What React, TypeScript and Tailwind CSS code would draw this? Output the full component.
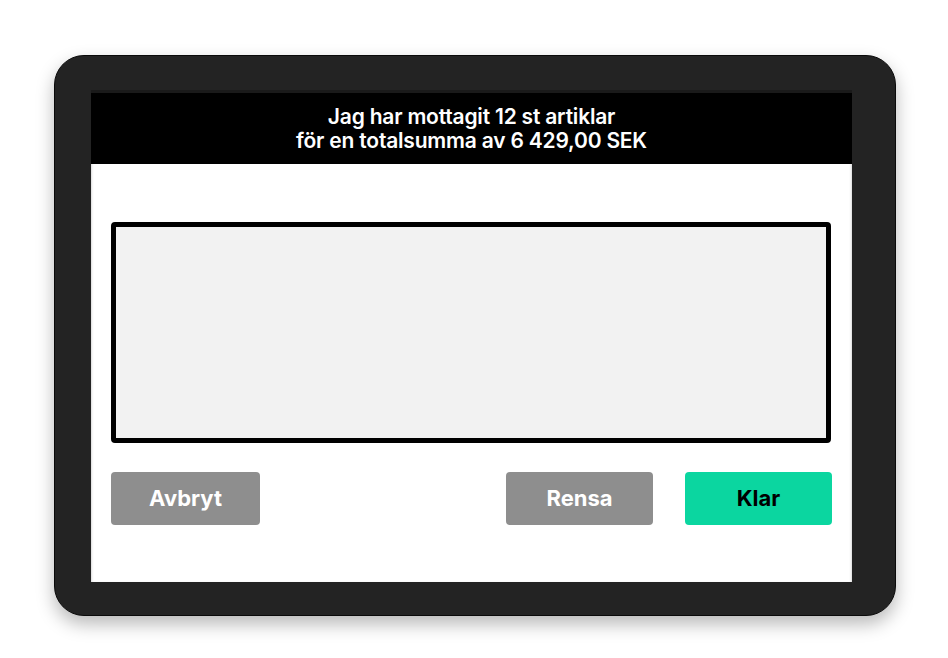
import React from "react";

export default function App() {
  return (
    <div
      className="w-[948px] h-[658px] bg-white overflow-hidden"
      style={{ fontFamily: "Inter, 'Liberation Sans', sans-serif" }}
    >
      <div className="pt-[55px] pl-[54px]">
        <div className="w-[842px] h-[561px] rounded-[30px] bg-[#232323] border border-[#0a0a0a] shadow-[0_8px_18px_rgba(0,0,0,0.28)] pt-[34px] pl-[36px]">
          <div className="w-[761px] h-[492px] bg-white flex flex-col shadow-[inset_0_2px_3px_rgba(0,0,0,0.3)]">
            <div className="h-[74px] bg-black border-t-[3px] border-[#1a1a1a] flex flex-col items-center justify-center pt-[1px] text-white text-[21px] font-semibold leading-[24px] tracking-[-0.2px]">
              <div>Jag har mottagit 12 st artiklar</div>
              <div>för en totalsumma av 6 429,00 SEK</div>
            </div>
            <div className="flex-1 flex flex-col px-[20px] pt-[58px]">
              <div className="h-[221px] w-[720px] border-[5px] border-black rounded-[4px] bg-[#f2f2f2]" />
              <div className="flex mt-[29px] w-[721px]">
                <button className="w-[149px] h-[53px] rounded-[4px] bg-[#8e8e8e] text-white text-[22px] font-bold flex items-center justify-center">
                  Avbryt
                </button>
                <div className="flex-1" />
                <button className="w-[147px] h-[53px] rounded-[4px] bg-[#8e8e8e] text-white text-[22px] font-bold flex items-center justify-center">
                  Rensa
                </button>
                <button className="ml-[32px] w-[147px] h-[53px] rounded-[4px] bg-[#0bd6a0] text-black text-[22px] font-bold flex items-center justify-center">
                  Klar
                </button>
              </div>
            </div>
          </div>
        </div>
      </div>
    </div>
  );
}
